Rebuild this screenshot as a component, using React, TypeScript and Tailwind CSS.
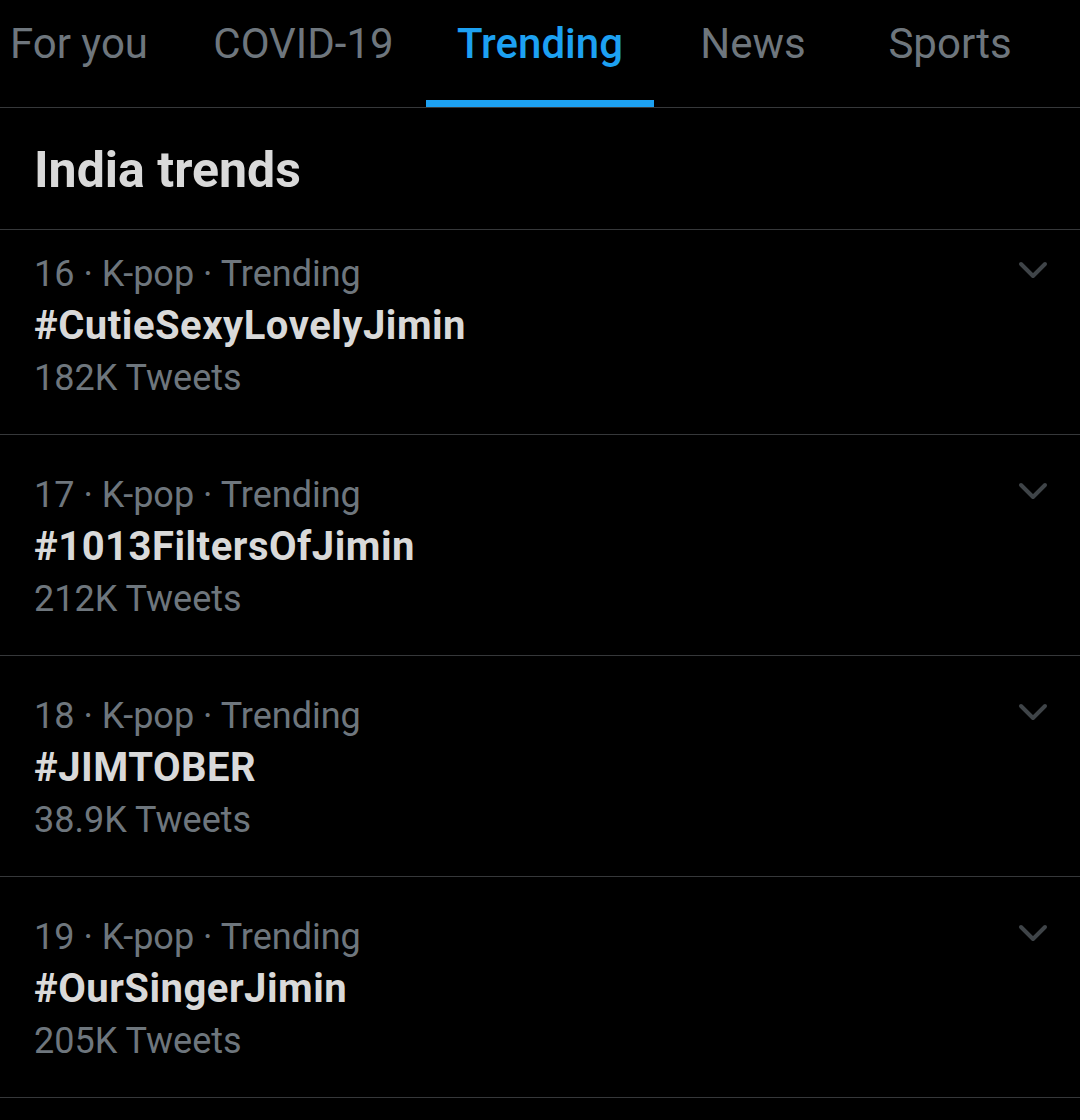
import React from 'react';

const tabs = [
  { label: 'For you', width: 'w-[204px]' },
  { label: 'COVID-19', width: 'w-[245px]' },
  { label: 'Trending', width: 'w-[228px]', active: true },
  { label: 'News', width: 'w-[198px]' },
  { label: 'Sports', width: 'w-[196px]' },
];

const trends = [
  { rank: 16, tag: '#CutieSexyLovelyJimin', count: '182K Tweets' },
  { rank: 17, tag: '#1013FiltersOfJimin', count: '212K Tweets' },
  { rank: 18, tag: '#JIMTOBER', count: '38.9K Tweets' },
  { rank: 19, tag: '#OurSingerJimin', count: '205K Tweets' },
];

function Chevron() {
  return (
    <svg width="30" height="20" viewBox="0 0 30 20" className="mt-[13px] shrink-0">
      <polyline
        points="3,3 15,15 27,3"
        fill="none"
        stroke="#3f4448"
        strokeWidth="4"
        strokeLinecap="round"
        strokeLinejoin="round"
      />
    </svg>
  );
}

function TrendRow({ rank, tag, count, first }: { rank: number; tag: string; count: string; first: boolean }) {
  return (
    <div
      className={`flex justify-between border-b border-[#36383a] pl-[34px] pr-[32px] pb-[30px] ${
        first ? 'pt-[18px]' : 'pt-[34px]'
      }`}
    >
      <div className="flex flex-col text-[36px] leading-[52px]">
        <span className="text-[#6e767d]">{rank} · K-pop · Trending</span>
        <span className="-mt-[1px] text-[40px] font-bold leading-[53px] tracking-[0.5px] text-[#d9d9d9]">
          {tag}
        </span>
        <span className="text-[#6e767d]">{count}</span>
      </div>
      <Chevron />
    </div>
  );
}

export default function App() {
  return (
    <div className="min-h-[1120px] w-[1080px] overflow-hidden bg-black font-['Roboto','Liberation_Sans',sans-serif]">
      <div className="flex h-[108px] border-b border-[#36383a]">
        <div className="-ml-[23px] flex shrink-0">
          {tabs.map((t) => (
            <div key={t.label} className={`relative flex shrink-0 flex-col items-center ${t.width}`}>
              <span
                className={`pt-[18px] text-[42px] leading-[52px] ${
                  t.active ? 'font-medium text-[#1da1f2]' : 'text-[#6e767d]'
                }`}
              >
                {t.label}
              </span>
              {t.active && <div className="absolute bottom-0 left-0 h-[7px] w-full bg-[#1da1f2]" />}
            </div>
          ))}
        </div>
      </div>
      <div className="border-b border-[#36383a] pl-[34px] pt-[32px] pb-[29px]">
        <h2 className="text-[50px] font-bold leading-[60px] text-[#d9d9d9]">India trends</h2>
      </div>
      {trends.map((t, i) => (
        <TrendRow key={t.rank} {...t} first={i === 0} />
      ))}
    </div>
  );
}
